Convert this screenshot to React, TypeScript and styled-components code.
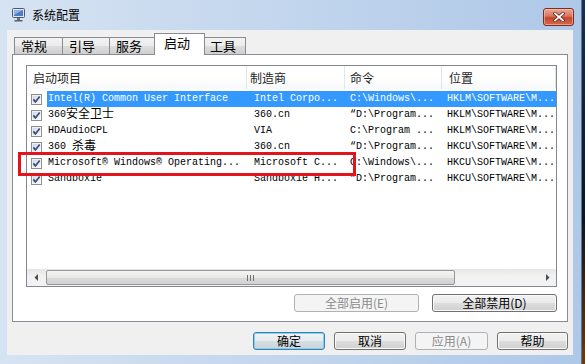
import React from 'react'
import styled, { createGlobalStyle, css } from 'styled-components'

const GlobalStyle = createGlobalStyle`
  html, body {
    margin: 0;
    padding: 0;
    background: #0e1a2c;
    font-family: "Noto Sans CJK SC", "Liberation Sans", sans-serif;
  }
`

const CJK = `"Noto Sans CJK SC", "Liberation Sans", sans-serif`
const MONO = `"Liberation Mono", "Noto Sans CJK SC", monospace`

const Screen = styled.div`
  position: relative;
  display: flex;
  width: 585px;
  height: 364px;
  overflow: hidden;
`
const Desktop = styled.div`
  flex: 1;
  background: linear-gradient(#1c2f4f, #0b1422 60%, #6a3a12);
`
const Window = styled.div`
  width: 582px;
  height: 364px;
  display: flex;
  flex-direction: column;
  background: linear-gradient(to right, #d6e3f2, #aec8e8);
  box-shadow: inset -1px 0 0 #5d7592;
`
const TitleBar = styled.div`
  height: 30px;
  display: flex;
  align-items: center;
  padding-left: 11px;
`
const TitleText = styled.span`
  font-family: ${CJK};
  font-size: 12px;
  color: #000;
  margin-left: 6px;
  line-height: 14px;
`
const CloseButton = styled.div`
  margin-left: auto;
  margin-right: 8px;
  align-self: flex-start;
  margin-top: 8px;
  width: 29px;
  height: 16px;
  border: 1px solid #7a2d20;
  border-radius: 3px;
  background: linear-gradient(#eaa996, #d9735a 45%, #c4452c 55%, #d46a50);
  box-shadow: inset 0 0 0 1px rgba(255, 210, 195, 0.5);
  display: flex;
  align-items: center;
  justify-content: center;
`
const Client = styled.div`
  flex: 1;
  margin: 0 9px 9px 7px;
  background: #f0f0f0;
  display: flex;
  flex-direction: column;
  padding: 3px 5px 5px 5px;
`
const TabStrip = styled.div`
  height: 21px;
  display: flex;
  align-items: flex-end;
  padding-left: 2px;
  position: relative;
  z-index: 1;
`
const Tab = styled.div<{ $active?: boolean; $w: number }>`
  width: ${({ $w }) => $w}px;
  box-sizing: border-box;
  height: 17px;
  border: 1px solid #898c95;
  border-bottom: none;
  margin-right: -1px;
  font-family: ${CJK};
  font-size: 13px;
  line-height: 16px;
  color: #000;
  padding-left: 6px;
  background: linear-gradient(#f3f3f3, #ebebeb 50%, #dddddd 51%, #cfcfcf);
  ${({ $active }) =>
    $active &&
    css`
      height: 22px;
      margin: 0 -2px -1px -2px;
      padding-left: 9px;
      padding-top: 1px;
      background: #fff;
      position: relative;
      z-index: 2;
    `}
`
const Panel = styled.div`
  height: 268px;
  box-sizing: border-box;
  border: 1px solid #898c95;
  background: #fff;
  padding: 10px 10px 9px 13px;
  display: flex;
  flex-direction: column;
`
const ListView = styled.div`
  height: 222px;
  box-sizing: border-box;
  border: 1px solid #828790;
  display: flex;
  flex-direction: column;
  background: #fff;
`
const HeaderRow = styled.div`
  height: 23px;
  display: flex;
  margin-bottom: 2px;
  background: linear-gradient(#ffffff, #ffffff 50%, #f7f8fa);
`
const HeaderCell = styled.div<{ $w?: number; $pad: number }>`
  ${({ $w }) => ($w ? `width: ${$w}px;` : 'flex: 1;')}
  box-sizing: border-box;
  padding-left: ${({ $pad }) => $pad}px;
  border-right: 1px solid #e3e5e8;
  font-family: ${CJK};
  font-size: 12px;
  line-height: 23px;
  color: #1e1e1e;
`
const Row = styled.div`
  height: 16px;
  display: flex;
`
const CheckCell = styled.div`
  width: 20px;
  display: flex;
  align-items: center;
  padding-left: 4px;
  box-sizing: border-box;
`
const RowBody = styled.div<{ $selected?: boolean }>`
  flex: 1;
  display: flex;
  background: ${({ $selected }) => ($selected ? '#3399ff' : 'transparent')};
  color: ${({ $selected }) => ($selected ? '#fff' : '#000')};
`
const Cell = styled.div<{ $w?: number; $pad: number }>`
  ${({ $w }) => ($w ? `width: ${$w}px;` : 'flex: 1;')}
  height: 16px;
  box-sizing: border-box;
  padding-left: ${({ $pad }) => $pad}px;
  font-family: ${MONO};
  font-size: 10px;
  line-height: 16px;
  white-space: pre;
`
const Cjk = styled.span`
  font-family: ${CJK};
  font-size: 12px;
  line-height: 1;
  vertical-align: -1px;
`
const HScroll = styled.div`
  margin-top: auto;
  height: 17px;
  display: flex;
  align-items: center;
  background: linear-gradient(to bottom, #e6e6e6, #f2f2f2 40%, #f2f2f2);
`
const ArrowBox = styled.div`
  width: 18px;
  height: 17px;
  display: flex;
  align-items: center;
  justify-content: center;
`
const Thumb = styled.div`
  width: 409px;
  height: 15px;
  box-sizing: border-box;
  border: 1px solid #969696;
  border-radius: 2px;
  margin-left: 1px;
  background: linear-gradient(#f4f4f4, #e9e9e9 50%, #dadada 51%, #d2d2d2);
  display: flex;
  align-items: center;
  justify-content: center;
  gap: 2px;
`
const Grip = styled.span`
  width: 1px;
  height: 6px;
  background: #6e6e6e;
`
const Spacer = styled.div`
  flex: 1;
`
const ButtonRow = styled.div<{ $gap: number; $top: number }>`
  display: flex;
  justify-content: flex-end;
  gap: ${({ $gap }) => $gap}px;
  margin-top: ${({ $top }) => $top}px;
`
const Button = styled.div<{ $w: number; $variant?: 'normal' | 'default' | 'disabled' }>`
  width: ${({ $w }) => $w}px;
  height: 18px;
  box-sizing: border-box;
  border: 1px solid #707070;
  border-radius: 3px;
  background: linear-gradient(#f2f2f2, #ebebeb 50%, #dddddd 51%, #cfcfcf);
  box-shadow: inset 0 0 0 1px #fbfbfb;
  font-family: ${CJK};
  font-size: 12px;
  line-height: 16px;
  text-align: center;
  color: #000;
  ${({ $variant }) =>
    $variant === 'disabled' &&
    css`
      border-color: #adb2b5;
      background: #f4f4f4;
      box-shadow: none;
      color: #8a8a8a;
    `}
  ${({ $variant }) =>
    $variant === 'default' &&
    css`
      border-color: #3c7fb1;
      box-shadow: inset 0 0 0 1px #7fd2f2;
      background: linear-gradient(#f0f4f7, #e6ebef 50%, #d6dde3 51%, #ccd5dc);
    `}
`
const Highlight = styled.div`
  position: absolute;
  left: 18px;
  top: 152px;
  width: 338px;
  height: 24px;
  box-sizing: border-box;
  border: 3px solid #e3141b;
`

type Item = { name: string; maker: string; cmd: string; loc: string; selected?: boolean }

const items: Item[] = [
  { name: 'Intel(R) Common User Interface', maker: 'Intel Corpo...', cmd: 'C:\\Windows\\...', loc: 'HKLM\\SOFTWARE\\M...', selected: true },
  { name: '360安全卫士', maker: '360.cn', cmd: '“D:\\Program...', loc: 'HKLM\\SOFTWARE\\M...' },
  { name: 'HDAudioCPL', maker: 'VIA', cmd: 'C:\\Program ...', loc: 'HKLM\\SOFTWARE\\M...' },
  { name: '360 杀毒', maker: '360.cn', cmd: '“D:\\Program...', loc: 'HKCU\\SOFTWARE\\M...' },
  { name: 'Microsoft® Windows® Operating...', maker: 'Microsoft C...', cmd: 'C:\\Windows\\...', loc: 'HKCU\\SOFTWARE\\M...' },
  { name: 'Sandboxie', maker: 'Sandboxie H...', cmd: '“D:\\Program...', loc: 'HKCU\\SOFTWARE\\M...' },
]

// chinese runs get the CJK font at full size, the rest stays mono
function mixed(text: string) {
  return text.split(/([\u3000-\u9fff]+)/).map((part, i) =>
    /[\u3000-\u9fff]/.test(part) ? <Cjk key={i}>{part}</Cjk> : part
  )
}

function CheckBox() {
  return (
    <svg width="11" height="11" viewBox="0 0 11 11">
      <defs>
        <linearGradient id="cb" x1="0" y1="0" x2="1" y2="1">
          <stop offset="0" stopColor="#cfd6e2" />
          <stop offset="1" stopColor="#f7f8fa" />
        </linearGradient>
      </defs>
      <rect x="0.5" y="0.5" width="10" height="10" fill="#fff" stroke="#8e8f8f" />
      <rect x="1.5" y="1.5" width="8" height="8" fill="url(#cb)" />
      <path d="M2.3 5.4 L4.4 7.9 L8.7 2.4" fill="none" stroke="#3b4d7c" strokeWidth="1.7" />
    </svg>
  )
}

function AppIcon() {
  return (
    <svg width="15" height="14" viewBox="0 0 15 14">
      <rect x="1.5" y="0.5" width="12" height="9" rx="1" fill="#dfe5ee" stroke="#4b5a72" />
      <rect x="3" y="2" width="9" height="6" fill="#4f79c0" />
      <path d="M3 2 L12 2 L3 7 Z" fill="#8fb2e6" />
      <rect x="6" y="10" width="3" height="2" fill="#6b7483" />
      <rect x="3.5" y="12" width="8" height="1.5" fill="#59606b" />
    </svg>
  )
}

function CloseGlyph() {
  return (
    <svg width="12" height="10" viewBox="0 0 12 10">
      <path d="M2 1.5 L10 8.5 M10 1.5 L2 8.5" stroke="#5a1d14" strokeWidth="3.2" strokeLinecap="square" />
      <path d="M2 1.5 L10 8.5 M10 1.5 L2 8.5" stroke="#fff" strokeWidth="1.8" strokeLinecap="square" />
    </svg>
  )
}

function Arrow({ dir }: { dir: 'left' | 'right' }) {
  return (
    <svg width="5" height="7" viewBox="0 0 5 7">
      {dir === 'left' ? <path d="M4 0 L0.5 3.5 L4 7 Z" fill="#4d4d4d" /> : <path d="M1 0 L4.5 3.5 L1 7 Z" fill="#4d4d4d" />}
    </svg>
  )
}

const tabs = [
  { label: '常规', w: 49 },
  { label: '引导', w: 48 },
  { label: '服务', w: 48 },
  { label: '启动', w: 51, active: true },
  { label: '工具', w: 43 },
]

export default function App() {
  return (
    <>
      <GlobalStyle />
      <Screen>
        <Window>
          <TitleBar>
            <AppIcon />
            <TitleText>系统配置</TitleText>
            <CloseButton>
              <CloseGlyph />
            </CloseButton>
          </TitleBar>
          <Client>
            <TabStrip>
              {tabs.map((t) => (
                <Tab key={t.label} $w={t.w} $active={t.active}>
                  {t.label}
                </Tab>
              ))}
            </TabStrip>
            <Panel>
              <ListView>
                <HeaderRow>
                  <HeaderCell $w={220} $pad={6}>启动项目</HeaderCell>
                  <HeaderCell $w={98} $pad={3}>制造商</HeaderCell>
                  <HeaderCell $w={97} $pad={5}>命令</HeaderCell>
                  <HeaderCell $pad={7}>位置</HeaderCell>
                </HeaderRow>
                {items.map((it) => (
                  <Row key={it.name}>
                    <CheckCell>
                      <CheckBox />
                    </CheckCell>
                    <RowBody $selected={it.selected}>
                      <Cell $w={200} $pad={1}>{mixed(it.name)}</Cell>
                      <Cell $w={98} $pad={7}>{it.maker}</Cell>
                      <Cell $w={97} $pad={5}>{it.cmd}</Cell>
                      <Cell $pad={5}>{it.loc}</Cell>
                    </RowBody>
                  </Row>
                ))}
                <HScroll>
                  <ArrowBox>
                    <Arrow dir="left" />
                  </ArrowBox>
                  <Thumb>
                    <Grip />
                    <Grip />
                    <Grip />
                  </Thumb>
                  <Spacer />
                  <ArrowBox>
                    <Arrow dir="right" />
                  </ArrowBox>
                </HScroll>
              </ListView>
              <ButtonRow $gap={13} $top={7}>
                <Button $w={125} $variant="disabled">全部启用(E)</Button>
                <Button $w={125}>全部禁用(D)</Button>
              </ButtonRow>
            </Panel>
            <ButtonRow $gap={9} $top={10}>
              <Button $w={72} $variant="default">确定</Button>
              <Button $w={72}>取消</Button>
              <Button $w={73} $variant="disabled">应用(A)</Button>
              <Button $w={71}>帮助</Button>
            </ButtonRow>
          </Client>
        </Window>
        <Desktop />
        <Highlight />
      </Screen>
    </>
  )
}
